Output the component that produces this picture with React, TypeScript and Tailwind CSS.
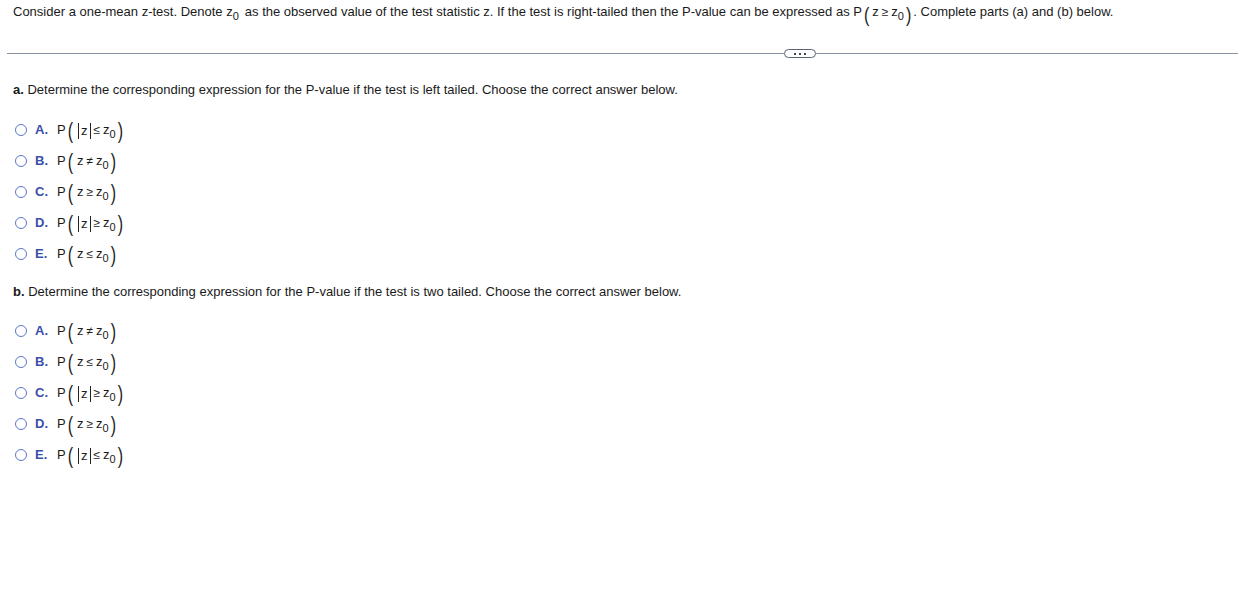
import React from 'react';

const Paren: React.FC<{ side: 'l' | 'r'; down?: boolean }> = ({ side, down }) => (
  <span
    className={
      down
        ? 'inline-block text-[16px] leading-[16px] scale-y-[1.3] font-light translate-y-[3px] text-[#222]'
        : 'inline-block text-[16px] leading-[16px] scale-y-[1.35] font-light translate-y-[1px] text-[#222]'
    }
  >
    {side === 'l' ? '(' : ')'}
  </span>
);

const Bar = () => <span className="inline-block w-[1px] h-[16px] bg-[#222]" />;

const Expr: React.FC<{ lhs: 'z' | '|z|'; rel: string }> = ({ lhs, rel }) => (
  <span className="inline-flex items-center text-[#1a1a1a] leading-[20px]">
    <span className="text-[13px] mr-[2px]">P</span>
    <Paren side="l" />
    {lhs === '|z|' ? (
      <span className="inline-flex items-center text-[13px] ml-[5px] gap-[2px] translate-y-[1px]">
        <Bar />
        z
        <Bar />
      </span>
    ) : (
      <span className="text-[13px] ml-[4px]">z</span>
    )}
    <span className="text-[12px] mx-[3px]">{rel}</span>
    <span className="text-[13px]">z</span>
    <span className="text-[11px] translate-y-[4px] mr-[2px]">0</span>
    <Paren side="r" />
  </span>
);

const Option: React.FC<{ letter: string; lhs: 'z' | '|z|'; rel: string }> = ({ letter, lhs, rel }) => (
  <div className="flex items-center h-[31px]">
    <span className="w-[12px] h-[12px] rounded-full border border-[#5a78c8] ml-[15px]" />
    <span className="ml-[8px] w-[22px] text-[13px] font-bold text-[#3a4fa8]">{letter}.</span>
    <Expr lhs={lhs} rel={rel} />
  </div>
);

const partA = [
  { letter: 'A', lhs: '|z|' as const, rel: '≤' },
  { letter: 'B', lhs: 'z' as const, rel: '≠' },
  { letter: 'C', lhs: 'z' as const, rel: '≥' },
  { letter: 'D', lhs: '|z|' as const, rel: '≥' },
  { letter: 'E', lhs: 'z' as const, rel: '≤' },
];

const partB = [
  { letter: 'A', lhs: 'z' as const, rel: '≠' },
  { letter: 'B', lhs: 'z' as const, rel: '≤' },
  { letter: 'C', lhs: '|z|' as const, rel: '≥' },
  { letter: 'D', lhs: 'z' as const, rel: '≥' },
  { letter: 'E', lhs: '|z|' as const, rel: '≤' },
];

export default function App() {
  return (
    <div className="w-[1238px] h-[605px] bg-white font-['Liberation_Sans',Arial,sans-serif] text-[#1a1a1a] overflow-hidden">
      <div className="pl-[13px] pt-[1px] text-[13px] leading-[22px] flex items-center whitespace-nowrap">
        <span>Consider a one-mean z-test. Denote z</span>
        <span className="text-[11px] translate-y-[4px] mr-[6px]">0</span>
        <span>as the observed value of the test statistic z. If the test is right-tailed then the P-value can be expressed as P</span>
        <span className="inline-flex items-center ml-[2px]">
          <Paren side="l" down />
          <span className="text-[13px] ml-[3px]">z</span>
          <span className="text-[12px] mx-[3px]">≥</span>
          <span className="text-[13px]">z</span>
          <span className="text-[11px] translate-y-[4px] mr-[2px]">0</span>
          <Paren side="r" down />
        </span>
        <span className="ml-[2px]">. Complete parts (a) and (b) below.</span>
      </div>

      <div className="flex items-center mt-[26px] ml-[7px]">
        <div className="w-[777px] h-[1px] bg-[#8a93a2]" />
        <div className="flex items-center justify-center gap-[3px] w-[32px] h-[9px] rounded-full border border-[#5b6475] bg-white">
          <span className="w-[2px] h-[2px] bg-[#3f4656]" />
          <span className="w-[2px] h-[2px] bg-[#3f4656]" />
          <span className="w-[2px] h-[2px] bg-[#3f4656]" />
        </div>
        <div className="flex-1 h-[1px] bg-[#8a93a2]" />
      </div>

      <p className="pl-[13px] mt-[23px] text-[13px] leading-[18px]">
        <span className="font-bold">a.</span> Determine the corresponding expression for the P-value if the test is left tailed. Choose the correct answer below.
      </p>
      <div className="mt-[15px]">
        {partA.map((o) => (
          <Option key={o.letter} {...o} />
        ))}
      </div>

      <p className="pl-[13px] mt-[14px] text-[13px] leading-[18px]">
        <span className="font-bold">b.</span> Determine the corresponding expression for the P-value if the test is two tailed. Choose the correct answer below.
      </p>
      <div className="mt-[14px]">
        {partB.map((o) => (
          <Option key={o.letter} {...o} />
        ))}
      </div>
    </div>
  );
}
